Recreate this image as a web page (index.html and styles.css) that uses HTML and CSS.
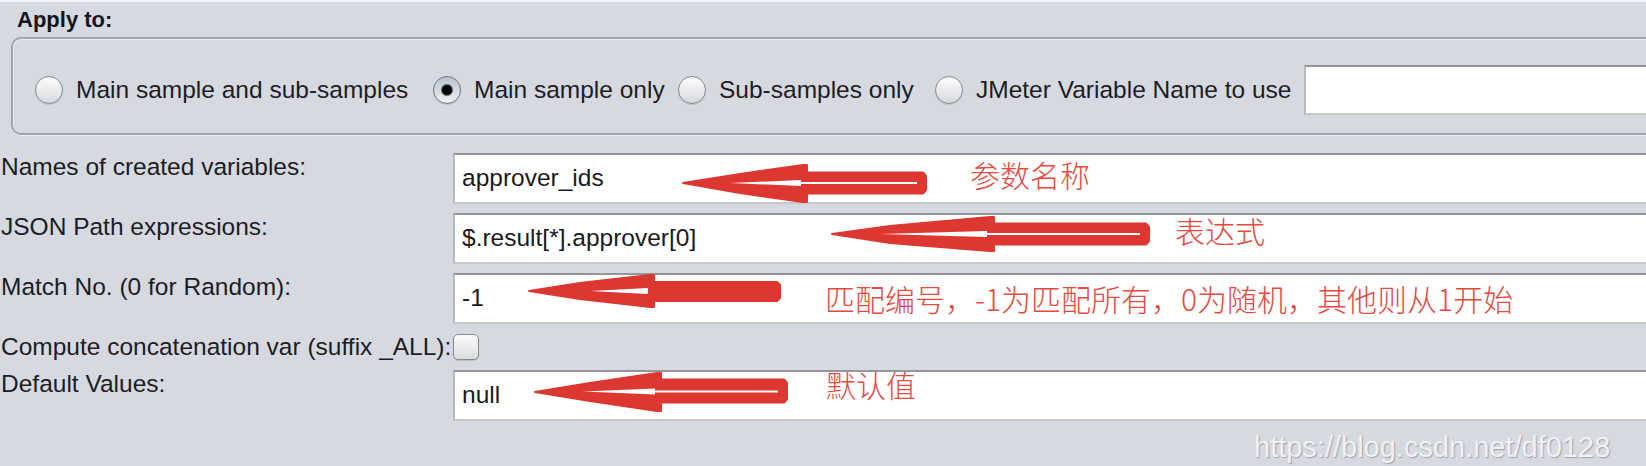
FILE: index.html
```html
<!DOCTYPE html>
<html lang="en">
<head>
<meta charset="utf-8">
<title>JSON Extractor</title>
<link rel="stylesheet" href="styles.css">
</head>
<body>
<div class="panel">
  <div class="edge"></div>
  <div class="title">Apply to:</div>
  <div class="apply">
    <label class="radio"><span class="dot"></span><span>Main sample and sub-samples</span></label>
    <label class="radio"><span class="dot on"></span><span>Main sample only</span></label>
    <label class="radio"><span class="dot"></span><span>Sub-samples only</span></label>
    <label class="radio"><span class="dot"></span><span>JMeter Variable Name to use</span></label>
    <div class="field varfield"></div>
  </div>
  <div class="form">
    <div class="lbl">Names of created variables:</div>
    <div class="field">approver_ids</div>
    <div class="lbl">JSON Path expressions:</div>
    <div class="field">$.result[*].approver[0]</div>
    <div class="lbl">Match No. (0 for Random):</div>
    <div class="field">-1</div>
    <div class="lbl">Compute concatenation var (suffix _ALL):</div>
    <div class="checkcell"><span class="check"></span></div>
    <div class="lbl">Default Values:</div>
    <div class="field">null</div>
  </div>

  <svg class="arrows" width="1646" height="466" viewBox="0 0 1646 466" aria-hidden="true">
    <g class="arrow">
      <polygon points="683,183 740,174 803,165 807,165 807,172.5 923,172.5 926,176 926,190 923,193.5 807,193.5 807,202 803,202 740,193"/>
      <path class="hole" d="M730,183 L801,180 L801,186 Z"/>
      <line class="hole-line" x1="800" y1="183" x2="917" y2="183"/>
    </g>
    <g class="arrow">
      <polygon points="832,234 890,226 990,217 994,217 994,223.5 1146,223.5 1149,227 1149,241 1146,244.5 994,244.5 994,251 990,251 890,243"/>
      <path class="hole" d="M880,234 L987,231 L987,237 Z"/>
      <line class="hole-line" x1="986" y1="234" x2="1140" y2="234"/>
    </g>
    <g class="arrow">
      <polygon points="529,291 580,283 650,275 654,275 654,282 777,282 780,285 780,298 777,301 654,301 654,307 650,307 580,299"/>
      <path class="hole" d="M590,291 L648,288 L648,294 Z"/>
    </g>
    <g class="arrow">
      <polygon points="535,392 590,383 657,373 661,373 661,379.5 784,379.5 787,383 787,399 784,402.5 661,402.5 661,411 657,411 590,401"/>
      <path class="hole" d="M583,391.5 L655,388.5 L655,394.5 Z"/>
      <line class="hole-line" x1="654" y1="391.5" x2="778" y2="391.5"/>
    </g>
  </svg>

  <div class="note n1">参数名称</div>
  <div class="note n2">表达式</div>
  <div class="note n3">匹配编号，-1为匹配所有，0为随机，其他则从1开始</div>
  <div class="note n4">默认值</div>

  <div class="mark">https://blog.csdn.net/df0128</div>
</div>
</body>
</html>
```

FILE: styles.css
```css
html, body {
  margin: 0;
  padding: 0;
  background: #d6d9df;
}

body {
  font-family: "Liberation Sans", Arial, sans-serif;
  color: #1d1d24;
}

.panel {
  position: relative;
  width: 1646px;
  height: 466px;
  overflow: hidden;
  background: #d6d9df;
}

.edge {
  height: 2px;
  background: #f2f3f5;
}

.title {
  font-weight: bold;
  font-size: 22px;
  line-height: 24px;
  padding: 6px 0 0 17px;
  color: #15151c;
}

.apply {
  margin: 5px 0 0 11px;
  width: 1700px;
  box-sizing: border-box;
  border: 2px solid #a2a5aa;
  border-radius: 10px;
  padding: 26px 0 18px 22px;
  display: grid;
  grid-template-columns: 398px 245px 257px 369px 420px;
  align-items: center;
  box-shadow: inset 1px 1px 0 #e9ebee, 0 1px 0 #eef0f3;
}

.radio {
  display: flex;
  align-items: center;
  gap: 13px;
  font-size: 24.5px;
  line-height: 28px;
  white-space: nowrap;
}

.dot {
  flex: none;
  width: 28px;
  height: 28px;
  box-sizing: border-box;
  border-radius: 50%;
  border: 1.5px solid #878a90;
  background: linear-gradient(#fdfdfd, #d7d9dd);
  box-shadow: 0 1px 1px rgba(0, 0, 0, 0.12);
}

.dot.on {
  border-color: #6e7784;
  background:
    radial-gradient(circle, #000 0 4px, #2e3138 5px, rgba(60, 64, 72, 0) 6.5px),
    linear-gradient(#b9c2ce, #eef1f5);
}

.field {
  height: 51px;
  box-sizing: border-box;
  background: #fff;
  border: 2px solid #b7babf;
  border-top-color: #93969b;
  border-bottom-color: #c6c8cc;
  padding-left: 7px;
  font-size: 24.5px;
  line-height: 45px;
  white-space: nowrap;
  color: #1a1a22;
}

.varfield {
  height: 50px;
}

.form {
  margin-top: 18px;
  display: grid;
  grid-template-columns: 453px 1250px;
  row-gap: 9px;
}

.lbl {
  align-self: start;
  font-size: 24.5px;
  line-height: 28px;
  padding-left: 1px;
  white-space: nowrap;
}

.checkcell {
  display: flex;
  align-items: center;
  height: 28px;
}

.check {
  width: 26px;
  height: 26px;
  box-sizing: border-box;
  border: 1.5px solid #85888e;
  border-radius: 5px;
  background: linear-gradient(#fbfbfb, #d9dce0);
  box-shadow: 0 1px 1px rgba(0, 0, 0, 0.12);
}

.arrows {
  position: absolute;
  left: 0;
  top: 0;
  pointer-events: none;
}

.arrow polygon {
  fill: #dc3730;
  stroke: #dc3730;
  stroke-width: 2;
  stroke-linejoin: round;
}

.arrow .hole {
  fill: #fff;
}

.arrow .hole-line {
  stroke: #fff;
  stroke-width: 2;
}

.note {
  position: absolute;
  color: #e5493f;
  font-family: "Noto Sans CJK SC", "Noto Sans", sans-serif;
  font-weight: 300;
  font-size: 30px;
  line-height: 30px;
  white-space: nowrap;
}

.n1 { left: 970px; top: 159px; }
.n2 { left: 1175px; top: 215px; }
.n3 { left: 825px; top: 283px; }
.n4 { left: 826px; top: 369px; }

.mark {
  position: absolute;
  left: 1254px;
  top: 430px;
  font-family: "Liberation Sans", Arial, sans-serif;
  font-size: 29px;
  line-height: 34px;
  color: #eff1f4;
  text-shadow: 1px 1px 1px rgba(90, 95, 105, 0.45);
  white-space: nowrap;
}
```
